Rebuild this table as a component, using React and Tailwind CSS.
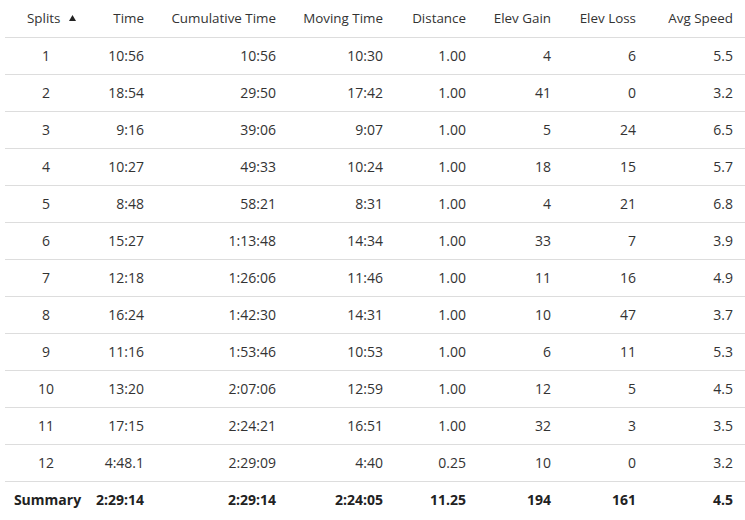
const rows = [
  ["1", "10:56", "10:56", "10:30", "1.00", "4", "6", "5.5"],
  ["2", "18:54", "29:50", "17:42", "1.00", "41", "0", "3.2"],
  ["3", "9:16", "39:06", "9:07", "1.00", "5", "24", "6.5"],
  ["4", "10:27", "49:33", "10:24", "1.00", "18", "15", "5.7"],
  ["5", "8:48", "58:21", "8:31", "1.00", "4", "21", "6.8"],
  ["6", "15:27", "1:13:48", "14:34", "1.00", "33", "7", "3.9"],
  ["7", "12:18", "1:26:06", "11:46", "1.00", "11", "16", "4.9"],
  ["8", "16:24", "1:42:30", "14:31", "1.00", "10", "47", "3.7"],
  ["9", "11:16", "1:53:46", "10:53", "1.00", "6", "11", "5.3"],
  ["10", "13:20", "2:07:06", "12:59", "1.00", "12", "5", "4.5"],
  ["11", "17:15", "2:24:21", "16:51", "1.00", "32", "3", "3.5"],
  ["12", "4:48.1", "2:29:09", "4:40", "0.25", "10", "0", "3.2"],
];

const summary = ["Summary", "2:29:14", "2:29:14", "2:24:05", "11.25", "194", "161", "4.5"];

const headers = ["Time", "Cumulative Time", "Moving Time", "Distance", "Elev Gain", "Elev Loss", "Avg Speed"];
const widths = ["w-[82px]", "w-[69px]", "w-[132px]", "w-[107px]", "w-[83px]", "w-[85px]", "w-[85px]", "w-[97px]"];

export default function App() {
  return (
    <div className="bg-white pl-[5px] font-['Open_Sans',sans-serif] text-[14px] text-[#333]">
      <table className="w-[740px] table-fixed border-collapse">
        <colgroup>
          {widths.map((w, i) => (
            <col key={i} className={w} />
          ))}
        </colgroup>
        <thead>
          <tr className="h-[37px] border-b border-[#ddd] text-[13.4px]">
            <th className="pl-[22px] text-left font-normal">
              <span className="inline-flex items-center">
                Splits
                <svg width="7" height="6" viewBox="0 0 7 6" className="ml-[9px]">
                  <path d="M3.5 0 L7 6 L0 6 Z" fill="#222" />
                </svg>
              </span>
            </th>
            {headers.map((h) => (
              <th key={h} className="pr-[12px] text-right font-normal whitespace-nowrap">
                {h}
              </th>
            ))}
          </tr>
        </thead>
        <tbody>
          {rows.map((r) => (
            <tr key={r[0]} className="h-[37px] border-b border-[#ddd]">
              {r.map((c, i) => (
                <td key={i} className={i === 0 ? "text-center" : "pr-[12px] text-right"}>
                  {c}
                </td>
              ))}
            </tr>
          ))}
          <tr className="h-[37px] font-bold text-[#222]">
            {summary.map((c, i) => (
              <td key={i} className={i === 0 ? "pl-[3px] text-center" : "pr-[12px] text-right"}>
                {c}
              </td>
            ))}
          </tr>
        </tbody>
      </table>
    </div>
  );
}
